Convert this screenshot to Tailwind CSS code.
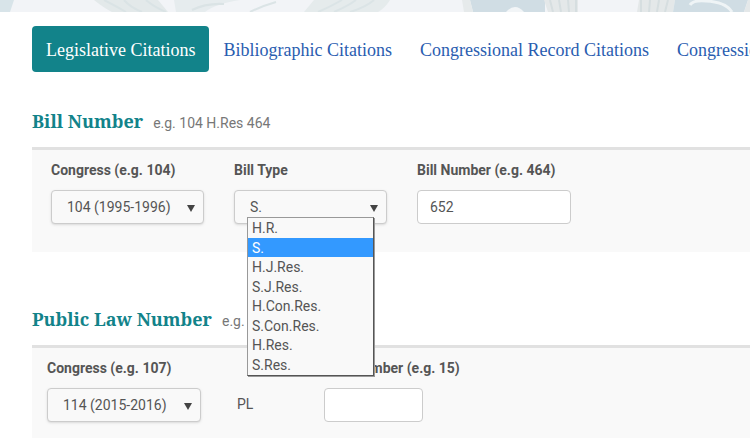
<!DOCTYPE html>
<html lang="en">
<head>
    <meta charset="UTF-8">
    <meta name="viewport" content="width=device-width, initial-scale=1.0">
    <title>Citation Search</title>
    <script src="https://cdn.jsdelivr.net/npm/@tailwindcss/browser@4"></script>
</head>
<body class="bg-white overflow-x-hidden font-[Roboto,sans-serif] text-sm text-[#555555]">
    <header class="h-3 overflow-hidden bg-[#f2f4f7]">
        <svg class="w-full h-3" viewBox="0 0 750 12" preserveAspectRatio="xMinYMin slice" fill="none" aria-hidden="true">
            <path d="M0 0H14L10 12H0Z" fill="#d8e4e9"/>
            <path d="M94 0Q104 8 112 12H168L158 0Z" fill="#e3e9ea"/>
            <path d="M174 0H240Q215 4 205 12H176Z" fill="#e6ecee"/>
            <path d="M104 0Q116 6 126 12M124 0Q130 7 142 12M146 0Q154 7 166 12M192 10Q206 3 224 4" stroke="#dae3e5" stroke-width="2"/>
            <path d="M314 0H390Q385 8 378 12H304Z" fill="#e5ebec"/>
            <path d="M250 12Q262 6 276 2M318 12Q332 6 342 0M334 12Q348 6 356 0M350 12Q366 7 374 0" stroke="#dbe4e6" stroke-width="2"/>
            <path d="M470 0H545V12H473Z" fill="#d0dde4"/>
            <path d="M462 0H470L473 12H464Z" fill="#e6eaeb"/>
            <path d="M544 0H578V12H548Z" fill="#e4e8e9"/>
            <path d="M639 0H675L673 12H637Z" fill="#e4e8e9"/>
            <path d="M675 0H748L744 12H673Z" fill="#d0dde4"/>
            <path d="M748 0H750V12H744Z" fill="#e4e8e9"/>
            <path d="M550 0L553 12M559 0L561 12M568 0L569 12M576 0V12M641 0V12M650 0L649 12M659 0L657 12M668 0L665 12" stroke="#d6dee0" stroke-width="2"/>
            <path d="M506 12Q515 2 524 12Z" fill="#f2f5f7"/>
            <path d="M690 5Q693 0 706 1Q726 2 732 12" stroke="#eff4f6" stroke-width="3"/>
        </svg>
    </header>

    <nav class="mt-[14px] ml-8 flex overflow-hidden whitespace-nowrap text-lg leading-11 font-['Liberation_Serif',serif] text-[#2a5db0]">
        <a href="#legislative" class="pt-0.5 px-[14px] rounded bg-[#12838a] text-white">Legislative Citations</a>
        <a href="#bibliographic" class="pt-0.5 px-[14px]">Bibliographic Citations</a>
        <a href="#record" class="pt-0.5 px-[14px]">Congressional Record Citations</a>
        <a href="#hearing" class="pt-0.5 px-[14px]">Congressional Hearing Citations</a>
    </nav>

    <main class="ml-8">
        <section class="mt-9">
            <div class="flex items-baseline gap-[10px] pb-3">
                <h2 class="text-lg leading-[27px] font-bold font-['Noto_Serif','Liberation_Serif',serif] text-[#12838a]">Bill Number</h2>
                <span class="text-[#777777]">e.g. 104 H.Res 464</span>
            </div>
            <form class="flex gap-[30px] border-t-[3px] border-[#e1e1e1] bg-[#f9f9f9] pt-[10px] pb-7 pl-[19px]">
                <div>
                    <label for="billCongress" class="block mb-[10px] leading-5 font-bold">Congress (e.g. 104)</label>
                    <div class="relative w-[153px]">
                        <select id="billCongress" class="appearance-none w-full h-[34px] pl-[15px] pb-px rounded border border-[#cccccc] bg-[#f9f9f9] shadow-sm">
                            <option>104 (1995-1996)</option>
                        </select>
                        <svg class="absolute right-[9px] top-[15px] w-2 h-[7px] pointer-events-none" viewBox="0 0 8 7" aria-hidden="true"><path d="M0 0H8L4 7Z" fill="#444444"/></svg>
                    </div>
                </div>
                <div>
                    <label for="billType" class="block mb-[10px] leading-5 font-bold">Bill Type</label>
                    <div class="relative w-[153px]">
                        <select id="billType" class="appearance-none w-full h-[34px] pl-[15px] pb-px rounded border border-[#cccccc] bg-[#f9f9f9] shadow-sm">
                            <option>S.</option>
                        </select>
                        <svg class="absolute right-[9px] top-[15px] w-2 h-[7px] pointer-events-none" viewBox="0 0 8 7" aria-hidden="true"><path d="M0 0H8L4 7Z" fill="#444444"/></svg>
                        <!-- open option list -->
                        <ul role="listbox" aria-label="Bill Type" class="absolute z-10 left-[13px] top-[27px] w-[127px] border border-t-[#999999] border-l-[#999999] border-r-[#555555] border-b-[#555555] bg-[#f9f9f9] shadow-[1px_1px_0_#999999]">
                            <li role="option" class="h-5 px-1 leading-5">H.R.</li>
                            <li role="option" aria-selected="true" class="h-[19px] px-1 leading-5 bg-[#3399ff] text-white">S.</li>
                            <li role="option" class="h-5 px-1 leading-5">H.J.Res.</li>
                            <li role="option" class="h-[19px] px-1 leading-5">S.J.Res.</li>
                            <li role="option" class="h-5 px-1 leading-5">H.Con.Res.</li>
                            <li role="option" class="h-[19px] px-1 leading-5">S.Con.Res.</li>
                            <li role="option" class="h-5 px-1 leading-5">H.Res.</li>
                            <li role="option" class="h-5 px-1 leading-5">S.Res.</li>
                        </ul>
                    </div>
                </div>
                <div>
                    <label for="billNumber" class="block mb-[10px] leading-5 font-bold">Bill Number (e.g. 464)</label>
                    <input id="billNumber" type="text" value="652" class="w-[154px] h-[34px] px-3 rounded border border-[#cccccc] bg-white">
                </div>
            </form>
        </section>

        <section class="mt-[54px]">
            <div class="flex items-baseline gap-[10px] pb-3">
                <h2 class="text-lg leading-[27px] font-bold font-['Noto_Serif','Liberation_Serif',serif] text-[#12838a]">Public Law Number</h2>
                <span class="text-[#777777]">e.g.</span>
            </div>
            <form class="flex border-t-[3px] border-[#e1e1e1] bg-[#f9f9f9] pt-[10px] pb-7 pl-[15px]">
                <div>
                    <label for="lawCongress" class="block mb-[10px] leading-5 font-bold">Congress (e.g. 107)</label>
                    <div class="relative w-[154px]">
                        <select id="lawCongress" class="appearance-none w-full h-[34px] pl-[15px] pb-px rounded border border-[#cccccc] bg-[#f9f9f9] shadow-sm">
                            <option>114 (2015-2016)</option>
                        </select>
                        <svg class="absolute right-[9px] top-[15px] w-2 h-[7px] pointer-events-none" viewBox="0 0 8 7" aria-hidden="true"><path d="M0 0H8L4 7Z" fill="#444444"/></svg>
                    </div>
                </div>
                <span class="ml-9 w-[87px] pt-[30px] leading-8">PL</span>
                <div>
                    <label for="lawNumber" class="block mb-[10px] leading-5 font-bold">Law Number (e.g. 15)</label>
                    <input id="lawNumber" type="text" class="w-[99px] h-[34px] px-3 rounded border border-[#cccccc] bg-white">
                </div>
            </form>
        </section>
    </main>
</body>
</html>
